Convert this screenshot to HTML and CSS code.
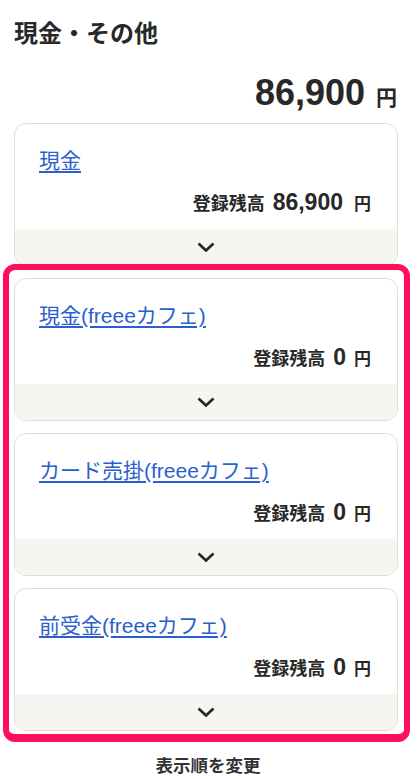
FILE: index.html
```html
<!DOCTYPE html>
<html lang="ja">
<head>
<meta charset="utf-8">
<title>現金・その他</title>
<link rel="stylesheet" href="styles.css">
</head>
<body>
<main class="page">
  <h1 class="title">現金・その他</h1>
  <div class="total"><span class="total-num">86,900</span><span class="total-yen">円</span></div>

  <div class="card">
    <div class="card-body">
      <div class="link-row"><a class="card-link" href="#">現金</a></div>
      <div class="balance"><span class="bal-label">登録残高</span><span class="bal-num">86,900</span><span class="bal-yen bal-yen-wide">円</span></div>
    </div>
    <div class="card-foot"><svg class="chev" width="18" height="10" viewBox="0 0 18 10"><path d="M1.5 1.5 L9 8.5 L16.5 1.5" fill="none" stroke="#282828" stroke-width="2.7"/></svg></div>
  </div>

  <div class="group">
    <div class="card">
      <div class="card-body">
        <div class="link-row"><a class="card-link" href="#">現金(freeeカフェ)</a></div>
        <div class="balance"><span class="bal-label">登録残高</span><span class="bal-num">0</span><span class="bal-yen">円</span></div>
      </div>
      <div class="card-foot"><svg class="chev" width="18" height="10" viewBox="0 0 18 10"><path d="M1.5 1.5 L9 8.5 L16.5 1.5" fill="none" stroke="#282828" stroke-width="2.7"/></svg></div>
    </div>
    <div class="card">
      <div class="card-body">
        <div class="link-row"><a class="card-link" href="#">カード売掛(freeeカフェ)</a></div>
        <div class="balance"><span class="bal-label">登録残高</span><span class="bal-num">0</span><span class="bal-yen">円</span></div>
      </div>
      <div class="card-foot"><svg class="chev" width="18" height="10" viewBox="0 0 18 10"><path d="M1.5 1.5 L9 8.5 L16.5 1.5" fill="none" stroke="#282828" stroke-width="2.7"/></svg></div>
    </div>
    <div class="card">
      <div class="card-body">
        <div class="link-row"><a class="card-link" href="#">前受金(freeeカフェ)</a></div>
        <div class="balance"><span class="bal-label">登録残高</span><span class="bal-num">0</span><span class="bal-yen">円</span></div>
      </div>
      <div class="card-foot"><svg class="chev" width="18" height="10" viewBox="0 0 18 10"><path d="M1.5 1.5 L9 8.5 L16.5 1.5" fill="none" stroke="#282828" stroke-width="2.7"/></svg></div>
    </div>
    <div class="highlight"></div>
  </div>

  <div class="reorder">表示順を変更</div>
</main>
</body>
</html>
```

FILE: styles.css
```css
html, body {
  margin: 0;
  padding: 0;
  background: #ffffff;
}
body {
  font-family: "Liberation Sans", "Noto Sans CJK JP", sans-serif;
  color: #282828;
}
.page {
  padding: 17px 20px 0 14px;
  display: flex;
  flex-direction: column;
  gap: 12px;
}
.title {
  margin: 0;
  font-size: 24px;
  line-height: 33px;
  height: 33px;
  font-weight: bold;
}
.total {
  display: flex;
  justify-content: flex-end;
  align-items: baseline;
  height: 40px;
  margin-top: 11px;
  margin-bottom: -2px;
  line-height: 40px;
}
.total-num {
  font-size: 36px;
  font-weight: bold;
}
.total-yen {
  font-size: 21px;
  font-weight: bold;
  margin-left: 11px;
  margin-right: 1px;
}
.group {
  position: relative;
  display: flex;
  flex-direction: column;
  gap: 12px;
}
.card {
  border: 1px solid #e2ded6;
  border-radius: 12px;
  overflow: hidden;
  background: #ffffff;
}
.card-body {
  padding: 22px 26px 13px 24px;
  display: flex;
  flex-direction: column;
  gap: 12px;
}
.link-row {
  height: 30px;
  line-height: 30px;
}
.card-link {
  font-size: 21px;
  color: #2b5fce;
  text-decoration: underline;
  text-underline-offset: 3px;
  text-decoration-thickness: 2px;
}
.balance {
  display: flex;
  justify-content: flex-end;
  align-items: baseline;
  height: 28px;
  line-height: 28px;
  font-weight: bold;
}
.bal-label {
  font-size: 18px;
}
.bal-num {
  font-size: 23px;
  margin-left: 8px;
}
.bal-yen {
  font-size: 17px;
  margin-left: 8px;
}
.bal-yen-wide {
  margin-left: 11px;
}
.card-foot {
  background: #f6f5f1;
  height: 36px;
  display: flex;
  align-items: center;
  justify-content: center;
}
.chev {
  display: block;
}
.highlight {
  position: absolute;
  top: -14px;
  left: -11px;
  right: -12px;
  bottom: -11px;
  border: 6px solid #ff0f5b;
  border-bottom-width: 8px;
  border-radius: 12px;
  pointer-events: none;
}
.reorder {
  text-align: center;
  font-size: 17.5px;
  font-weight: bold;
  color: #333333;
  margin-top: 11px;
  margin-left: 4px;
  line-height: 24px;
  height: 24px;
}
```
